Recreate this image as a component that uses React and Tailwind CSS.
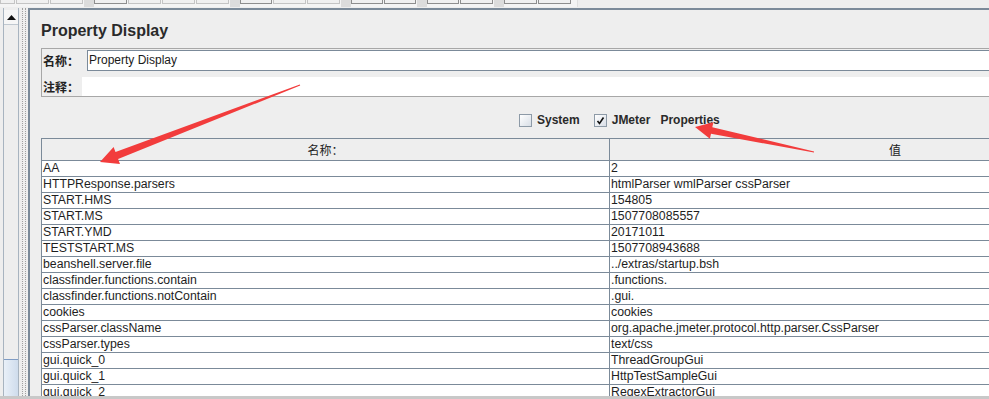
import React from 'react';

const rows = [
    ['AA', '2'],
    ['HTTPResponse.parsers', 'htmlParser wmlParser cssParser'],
    ['START.HMS', '154805'],
    ['START.MS', '1507708085557'],
    ['START.YMD', '20171011'],
    ['TESTSTART.MS', '1507708943688'],
    ['beanshell.server.file', '../extras/startup.bsh'],
    ['classfinder.functions.contain', '.functions.'],
    ['classfinder.functions.notContain', '.gui.'],
    ['cookies', 'cookies'],
    ['cssParser.className', 'org.apache.jmeter.protocol.http.parser.CssParser'],
    ['cssParser.types', 'text/css'],
    ['gui.quick_0', 'ThreadGroupGui'],
    ['gui.quick_1', 'HttpTestSampleGui'],
    ['gui.quick_2', 'RegexExtractorGui'],
];

// toolbar button stubs: [left, right, active]
const toolButtons = [
    [0, 15, false], [16, 49, false], [50, 83, false], 'gap',
    [94, 127, true], [128, 161, false], [162, 195, false], [196, 229, false], 'gap',
    [241, 273, true], [274, 307, false], [308, 341, false], 'gap',
    [352, 384, true], [386, 418, true], 'gap',
    [431, 463, true], [464, 497, true], 'gap',
    [508, 541, true], [542, 575, true],
];

// tapered annotation arrow from tail (tx,ty) to tip (hx,hy)
const arrowPoints = (tx, ty, hx, hy, tailW, neckW, headW, headL) => {
    const len = Math.hypot(hx - tx, hy - ty);
    const dx = (hx - tx) / len;
    const dy = (hy - ty) / len;
    const nx = -dy;
    const ny = dx;
    const cx = hx - dx * headL;
    const cy = hy - dy * headL;
    const p = [
        [tx + nx * tailW / 2, ty + ny * tailW / 2],
        [cx + nx * neckW / 2, cy + ny * neckW / 2],
        [cx + nx * headW / 2, cy + ny * headW / 2],
        [hx, hy],
        [cx - nx * headW / 2, cy - ny * headW / 2],
        [cx - nx * neckW / 2, cy - ny * neckW / 2],
        [tx - nx * tailW / 2, ty - ny * tailW / 2],
    ];
    return p.map(([x, y]) => `${x.toFixed(1)},${y.toFixed(1)}`).join(' ');
};

function Checkbox({ checked }) {
    return (
        <div className="w-[13px] h-[13px] border border-[#8d9aa7] bg-gradient-to-br from-white to-[#d8dee6] flex items-center justify-center">
            {checked && (
                <svg width="9" height="9" viewBox="0 0 9 9">
                    <path d="M1.5 5 L3.5 7.5 L7.5 1.5" fill="none" stroke="#111" strokeWidth="1.6" />
                </svg>
            )}
        </div>
    );
}

export default function App() {
    return (
        <div className="w-[989px] h-[399px] overflow-hidden relative flex flex-col bg-[#eeeeee] font-['Liberation_Sans','Noto_Sans_CJK_SC',sans-serif] text-[#222]">
            {/* toolbar remnants */}
            <div className="h-[8px] shrink-0 flex items-start">
                <div className="w-[578px] h-[7px] bg-[#f4f4f4] flex items-start border-r border-[#e0e0e0]">
                    {toolButtons.map((b, i) =>
                        b === 'gap' ? (
                            <div key={i} className="w-[10px] h-[7px] bg-[#dcdcdc]" />
                        ) : (
                            <div
                                key={i}
                                className={`h-[4px] mr-[1px] border-x border-b bg-[#f0f0f0] ${b[2] ? 'border-[#8e8e8e]' : 'border-[#c4c4c4]'}`}
                                style={{ width: b[1] - b[0] }}
                            />
                        )
                    )}
                </div>
            </div>

            <div className="flex-1 min-h-0 flex overflow-hidden">
                {/* left tree scrollbar + splitter */}
                <div className="w-[28px] shrink-0 flex">
                    <div className="w-[3px]" />
                    <div className="w-[16px] flex flex-col border-x border-[#a8b4c0] bg-[#eeeeee]">
                        <div className="mt-[2px] h-[15px] bg-[#f6f6f6] border-b border-[#c0c8d0] flex items-center justify-center">
                            <svg width="9" height="5" viewBox="0 0 9 5">
                                <path d="M0 5 L4.5 0 L9 5 Z" fill="#111" />
                            </svg>
                        </div>
                        <div className="flex-1" />
                        <div className="h-[37px] border-t border-[#7f9cc4] bg-gradient-to-r from-[#e9f0f8] to-[#cfdcec]" />
                    </div>
                    <div className="w-[3px]" />
                    <div className="w-[4px] border-x border-dotted border-[#a0a0a0]" />
                    <div className="w-[2px]" />
                </div>

                {/* property display panel */}
                <div className="flex-1 min-w-0 border-l-2 border-t-2 border-[#7b8a99] pl-[11px]">
                    <div className="mt-[11px] h-[20px] leading-[20px] text-[16px] font-bold text-[#2a2a2a] whitespace-nowrap">Property Display</div>

                    <div className="mt-[7px] w-[1200px] border border-[#a7a7a7] pt-[1px]">
                        <div className="flex h-[21px]">
                            <div className="w-[45px] pl-[1px] text-[12px] font-bold leading-[21px] font-['Noto_Sans_CJK_SC',sans-serif]">名称：</div>
                            <div className="flex-1 border border-[#7b8a99] bg-white pl-[1px] text-[12px] leading-[19px] text-[#1a1a1a]">Property Display</div>
                        </div>
                        <div className="flex h-[19px] mt-[6px]">
                            <div className="w-[40px] pl-[1px] text-[12px] font-bold leading-[19px] font-['Noto_Sans_CJK_SC',sans-serif]">注释：</div>
                            <div className="flex-1 bg-white" />
                        </div>
                    </div>

                    <div className="mt-[17px] h-[13px] flex items-center pl-[478px] text-[12px] font-bold text-[#2a2a2a]">
                        <Checkbox checked={false} />
                        <span className="ml-[5px] leading-[13px]">System</span>
                        <div className="ml-[14px]"><Checkbox checked /></div>
                        <span className="ml-[5px] leading-[13px] whitespace-pre">JMeter   Properties</span>
                    </div>

                    <div className="mt-[11px] w-[1140px] border-l border-t border-[#7b8a99] bg-white">
                        <div className="flex h-[22px] border-b border-[#7b8a99] bg-[#eeeeee] text-[12px] leading-[21px] font-['Noto_Sans_CJK_SC',sans-serif]">
                            <div className="w-[568px] border-r border-[#7b8a99] text-center">名称：</div>
                            <div className="w-[570px] text-center">值</div>
                        </div>
                        {rows.map(([k, v]) => (
                            <div key={k} className="flex h-[16px] border-b border-[#7b8a99] text-[12.3px] leading-[15px] text-[#1e1e1e] whitespace-nowrap">
                                <div className="w-[568px] border-r border-[#7b8a99] pl-[1px]">{k}</div>
                                <div className="w-[570px] pl-[1px]">{v}</div>
                            </div>
                        ))}
                    </div>
                </div>
            </div>

            <div className="h-[3px] shrink-0 bg-[#c8c8c8]" />

            {/* red annotation arrows */}
            <svg className="absolute inset-0 pointer-events-none" width="989" height="399">
                <polygon points={arrowPoints(300, 85, 100, 162, 1, 7.5, 18, 18)} fill="#f23c3c" />
                <polygon points={arrowPoints(814, 152, 695, 127, 1, 6.5, 17, 17)} fill="#f23c3c" />
            </svg>
        </div>
    );
}
